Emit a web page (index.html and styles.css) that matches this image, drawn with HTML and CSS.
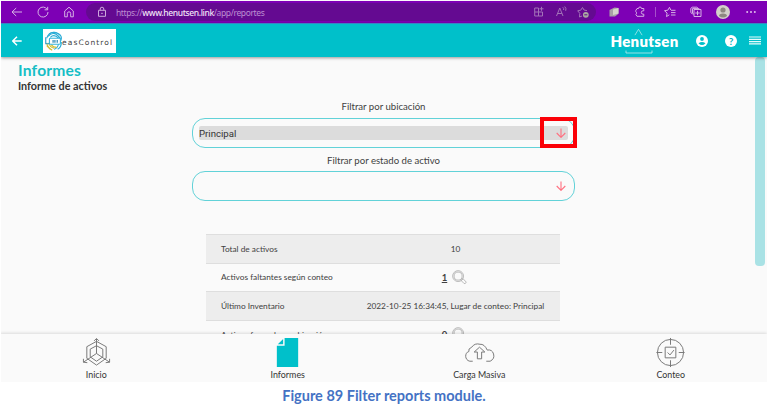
FILE: index.html
```html
<!DOCTYPE html>
<html lang="es">
<head>
<meta charset="utf-8">
<title>Informes</title>
<link rel="stylesheet" href="styles.css">
</head>
<body>
<div class="screen">
  <div class="browser">
    <svg class="ic back" viewBox="0 0 14 14"><path d="M12 7H2.200M6.200 3L2 7l4.200 4"/></svg>
    <svg class="ic reload" viewBox="0 0 14 14"><path d="M11.300 4.500A5 5 0 1 0 12 7M11.700 1.800v3H8.600"/></svg>
    <svg class="ic home" viewBox="0 0 14 14"><path d="M2.700 6L7 2.200 11.300 6v5.800H8.700V8.500a1.700 1.700 0 0 0-3.400 0v3.300H2.700z"/></svg>
    <div class="address">
      <svg class="ic lock" viewBox="0 0 14 14"><path d="M3.500 5.300h7v6h-7zM5.200 5.300V4a1.800 1.800 0 0 1 3.600 0v1.300"/><circle cx="7" cy="8.300" r=".4"/></svg>
      <span class="url">https://<b>www.henutsen.link</b>/app/reportes</span>
      <div class="tools">
        <svg class="ic" viewBox="0 0 14 14"><path d="M2.700 3H6.500V11H2.700zM2.700 7h7.800v4H6.500M9.500 1.800v4M7.500 3.800h4M10.500 7v4"/></svg>
        <svg class="ic" viewBox="0 0 14 14"><path d="M2.500 11L5.800 3 9 11M3.600 8.500h4.300M8.800 2.300q1.400 1 .8 2.700M10.700 1.500q2 2 1 4.300"/></svg>
        <svg class="ic" viewBox="0 0 14 14"><path d="M6 11l-2.500 1 .3-3.600L1.700 5.800l3-.6L6.500 2.500 8 5l3 .7"/><circle class="solid" cx="9.800" cy="9.800" r="2.900"/><path class="cut" d="M8.300 9.800h3"/></svg>
      </div>
    </div>
    <div class="extensions">
      <svg class="ic" viewBox="0 0 14 14"><path class="grey" d="M2.500 5l5-2.500 4 .5v5.800L8 11.500H2.500z"/><path class="pale" d="M6 4.500l5.500-1.500v5.500L6 10z"/></svg>
      <svg class="ic" viewBox="0 0 14 14"><path d="M10.800 4.200V3.500H8.500a1.500 1.500 0 0 0-3 0H4L2.800 5.500v1.200a1.500 1.500 0 0 1 0 2.600L4 11.300h6.800V9.200H10a1.600 1.600 0 0 1 0-3.400h.8z"/></svg>
      <i class="divider"></i>
      <svg class="ic" viewBox="0 0 14 14"><path d="M6.300 9.800L3.500 11.600l.6-3.500L1.500 5.700l3.300-.5 1.700-2.900L7.700 5M8 5.300h4.500M8 7.600h4.500M8 10h4.500"/></svg>
      <svg class="ic" viewBox="0 0 14 14"><path d="M3.500 9L1.800 7.600V3.300l1.500-1.100h4.500l1.200 1M5 4.500h7v7H5zM8.500 5.800v4.400M6.300 8h4.400M5 9.300l-1.500-1V3.600h6.800"/></svg>
      <svg class="avatar" viewBox="0 0 14 14"><circle cx="7" cy="7" r="7"/><circle class="face" cx="7" cy="5" r="2.600"/><path class="face" d="M3 11q0-2.600 4-2.600T11 11q-4 3-8 0z"/></svg>
      <svg class="ic dots" viewBox="0 0 14 14"><circle cx="3.200" cy="7" r="1"/><circle cx="7" cy="7" r="1"/><circle cx="10.800" cy="7" r="1"/></svg>
    </div>
  </div>

  <header class="appbar">
    <svg class="goback" viewBox="0 0 12 12"><path d="M10.700 6H2M6 1.700L1.700 6 6 10.300"/></svg>
    <div class="client">
      <svg class="print" viewBox="0 0 20 24">
        <g class="blue"><path d="M2 9Q5 1 12 3t6 7"/><path d="M3.500 7Q9 1 14 6t3.500 5"/><path d="M5 4Q12 0 17 6"/><path d="M6 8q4-4 9 1"/><path d="M15 15q-1 5-5 6M18 13q0 6-4 8"/></g>
        <g class="gold"><path d="M2 14q1 5 6 8M2 17l4 4M4 14q2 5 6 6M7 16q2 3 6 3"/></g>
        <rect x="5" y="9" width="12" height="6.500" rx="1"/><path class="bars" d="M9 11v3M11 11v3M13.500 11v3"/><path class="edge" d="M1 8v7h4"/>
      </svg>
      <span>easControl</span>
    </div>
    <div class="brand">
      <svg class="roof" viewBox="0 0 10 8"><path d="M1 7.500L5 1l4 6.500"/></svg>
      <span>Henutsen</span>
      <svg class="base" viewBox="0 0 28 4"><path d="M1 .5v2.500h26V.5"/></svg>
    </div>
    <svg class="user" viewBox="0 0 12 12"><circle class="disc" cx="6" cy="6" r="6"/><circle class="hole" cx="6" cy="4" r="1.900"/><path class="hole" d="M2.500 8.200Q6 5.800 9.500 8.200 6 12 2.500 8.200z"/></svg>
    <span class="help">?</span>
    <svg class="menu" viewBox="0 0 12 9"><path d="M0 1h12M0 3.300h12M0 5.600h12M0 7.900h12"/></svg>
  </header>

  <main class="content">
    <h1>Informes</h1>
    <h2>Informe de activos</h2>
    <div class="filters">
      <label class="t first">Filtrar por ubicación</label>
      <div class="select">
        <div class="value"><span>Principal</span><svg class="down" viewBox="0 0 10 10"><path d="M5 .5v8.700M.7 5L5 9.300 9.300 5"/></svg></div>
        <i class="highlight"></i>
      </div>
      <label class="t second">Filtrar por estado de activo</label>
      <div class="select">
        <div class="value empty"><span></span><svg class="down" viewBox="0 0 10 10"><path d="M5 .5v8.700M.7 5L5 9.300 9.300 5"/></svg></div>
      </div>
    </div>
    <div class="table">
      <div class="row odd"><span>Total de activos</span><div>10</div></div>
      <div class="row"><span>Activos faltantes según conteo</span><div><b>1</b><svg class="lens" viewBox="0 0 16 16"><circle cx="6.500" cy="6.500" r="5.800"/><circle cx="6.500" cy="6.500" r="4.300"/><path d="M10.500 10.200l1.200-1 3.500 3.700q-.6 1.900-2.200 1.600L9.800 11.300z"/></svg></div></div>
      <div class="row odd"><span>Último Inventario</span><div>2022-10-25 16:34:45, Lugar de conteo: Principal</div></div>
      <div class="row"><span>Activos fuera de su ubicación</span><div><b>0</b><svg class="lens" viewBox="0 0 16 16"><circle cx="6.500" cy="6.500" r="5.800"/><circle cx="6.500" cy="6.500" r="4.300"/><path d="M10.500 10.200l1.200-1 3.500 3.700q-.6 1.900-2.200 1.600L9.800 11.300z"/></svg></div></div>
    </div>
    <i class="scroll"></i>
  </main>

  <nav class="tabs">
    <a><svg viewBox="0 0 32 32"><path d="M16 4.500L26 10v12L16 29 6 22V10zM16 9l6.500 3.500v8L16 25l-6.500-4.500v-8zM16 2v15M16 17l13.500 9M16 17L2.500 26M13.500 4L16 1.500 18.500 4M2.500 22.500V26l4 .5M29.500 22.500V26l-4 .5"/></svg><span>Inicio</span></a>
    <a><svg viewBox="0 0 32 32"><path class="file" d="M13 1h14v30H5V9h8z"/><path class="file" d="M11.500 2v5.500H6z"/></svg><span>Informes</span></a>
    <a><svg viewBox="0 0 32 32"><path d="M9 25H6C.5 24 .5 16 5 15q-1-3 3-4.500Q11 6 16.500 7.500 21 7 24 13.500q5-1 6.500 4T27 25h-4M13.800 22.500v-7h-3.300L16 10.500l5.500 5h-3.300v7z"/></svg><span>Carga Masiva</span></a>
    <a><svg viewBox="0 0 32 32"><circle cx="16" cy="16" r="13.500"/><path d="M16 1v7M16 24v7M1.500 16h6M24.500 16h6M10.500 10.500h11v11h-11zM13 16l2.500 2.500 4-5"/></svg><span>Conteo</span></a>
  </nav>
</div>
<p class="caption">Figure 89 Filter reports module.</p>
</body>
</html>
```
FILE: styles.css
```css
* { box-sizing: border-box; }
body { margin: 0; background: #fff; font-family: Lato, sans-serif; color: #414141; }
svg { display: block; flex: none; fill: none; stroke-linejoin: round; overflow: visible; }
i { display: block; flex: none; }
.screen { width: 766px; height: 382px; margin-left: 1px; padding-top: 1px; display: flex; flex-direction: column; background: #fafafa; overflow: hidden; }

.browser { height: 22px; flex: none; background: #7d00b5; display: flex; align-items: center; }
.ic { width: 14px; height: 14px; stroke: #d5b0e4; stroke-width: 1; }
.back { margin-left: 9px; }
.reload { margin-left: 12px; }
.home { margin-left: 12px; }
.address { width: 510px; height: 18px; margin-left: 10px; border-radius: 9px; background: #640a91; display: flex; align-items: center; padding-left: 8px; }
.address .ic { stroke: #a273b8; }
.address .lock { stroke: #cda8dc; margin-left: 1px; }
.url { flex: none; margin-left: 7px; font: 8.500px "Noto Sans", sans-serif; letter-spacing: -.38px; color: #bd8ed1; white-space: nowrap; width: 150px; }
.url b { font-weight: 500; color: #f2e5f7; }
.tools { flex: none; display: flex; gap: 8px; margin-left: 266px; }
.solid { fill: #a9a9a0; stroke: none; }
.address .cut { stroke: #640a91; }
.extensions { display: flex; align-items: center; margin-left: 11px; }
.extensions .ic { margin-right: 12px; }
.extensions .ic:nth-child(2) { margin-right: 8px; }
.grey { fill: #a7a0a6; stroke: none; }
.pale { fill: #d5d5cc; stroke: none; }
.divider { width: 1px; height: 10px; background: #a650cb; margin-right: 7px; }
.avatar { width: 14px; height: 14px; fill: #d3d0ca; margin: 0 13px 0 1px; }
.face { fill: #8d8781; }
.extensions .dots { fill: #e1bdec; stroke: none; margin: 0 0 0 1px; }

.appbar { height: 34px; flex: none; position: relative; z-index: 1; background: #00c0ca; border-top: 1px solid #3984c2; box-shadow: 0 1px 3px rgba(0,0,0,.4); display: flex; align-items: center; }
.goback { width: 12px; height: 12px; margin-left: 10px; stroke: #fff; stroke-width: 1.500; }
.client { width: 73px; height: 24px; margin-left: 20px; background: #fff; display: flex; align-items: center; font: 7.500px "DejaVu Sans", sans-serif; color: #414141; }
.client span { display: block; margin: 4px 0 0 -2px; letter-spacing: 1.100px; }
.print { width: 20px; height: 22px; margin-left: 1px; stroke-width: 1.200; }
.blue { stroke: #2bacd6; }
.gold { stroke: #cfbd30; }
.print rect { fill: #fff; stroke: #36b5dc; }
.bars { stroke: #167cae; }
.edge { stroke: #289dca; }
.brand { width: 69px; height: 26px; margin-left: 494px; display: flex; flex-direction: column; align-items: center; }
.brand span { color: #fff; font: 800 15px/16px Lato, sans-serif; margin-top: -3px; letter-spacing: .3px; height: 17px; }
.brand svg { stroke: #bcebee; stroke-width: .8; }
.roof { width: 9px; height: 8px; margin-right: 12px; }
.base { width: 28px; height: 4px; margin-right: 12px; }
.user { width: 12px; height: 12px; margin-left: 17px; }
.disc { fill: #fff; }
.hole { fill: #00c0ca; }
.help { width: 12px; height: 12px; border-radius: 50%; background: #fff; color: #00b3bd; font: bold 10px/12px Lato, sans-serif; text-align: center; margin-left: 17px; }
.menu { width: 12px; height: 9px; margin-left: 12px; stroke: #e6fbfc; stroke-width: 1.200; }

.content { position: relative; height: 277px; flex: none; overflow: hidden; }
h1 { margin: 5px 0 0 17px; font: bold 15.600px/17px Lato, sans-serif; letter-spacing: .2px; color: #16bec6; }
h2 { margin: 0 0 0 17px; font: bold 10.800px/13px Lato, sans-serif; color: #333; }
.filters { width: 383px; margin-left: 191px; display: flex; flex-direction: column; }
.t { text-align: center; font-size: 9.600px; line-height: 14px; white-space: nowrap; }
.first { margin-top: 8px; margin-bottom: 4px; }
.second { margin: 6px 0 3px; }
.select { position: relative; height: 30px; border: 1px solid #62d2d8; border-radius: 13px; padding: 7px 6px 0; }
.value { height: 14px; border-radius: 2px; background: #dcdcdc; display: flex; align-items: center; justify-content: space-between; padding-right: 2px; font: 9.600px Roboto, sans-serif; color: #333; }
.empty { background: none; }
.down { width: 10px; height: 10px; stroke: #ff7080; stroke-width: 1.100; }
.highlight { position: absolute; left: 347px; top: -2px; width: 37px; height: 31px; border: 4px solid #fb0007; }
.table { width: 354px; margin: 33px 0 0 205px; font-size: 8.300px; }
.row { height: 28.600px; display: flex; align-items: center; padding-left: 15px; border-top: 1px solid #dedede; white-space: nowrap; }
.odd { background: #ededed; }
.row > span { width: 135px; }
.row > div { flex: 1; display: flex; align-items: center; justify-content: center; padding-right: 5px; }
.row b { font-size: 9.500px; text-decoration: underline; }
.lens { width: 15px; height: 15px; margin: 0 2px 0 5px; stroke: #999; stroke-width: .7; }
.scroll { position: absolute; right: 2px; top: 0; width: 10px; height: 209px; border-radius: 4px; background: #a9e2e5; }

.tabs { height: 48px; flex: none; position: relative; background: #fafafa; box-shadow: 0 -1px 3px rgba(0,0,0,.13); display: grid; grid-template-columns: repeat(4, 191.500px); margin-left: -1px; font-size: 8.900px; }
.tabs a { display: flex; flex-direction: column; align-items: center; padding: 3px 0 0 1px; line-height: 11px; color: #333; }
.tabs svg { width: 31px; height: 31px; margin-bottom: 1px; stroke: #777; stroke-width: 1; }
.tabs .file { fill: #00c0ca; stroke: none; }
.caption { margin: 5px 0 0; text-align: center; font: bold 14.500px/18px Lato, sans-serif; color: #4472c4; white-space: nowrap; }
```
